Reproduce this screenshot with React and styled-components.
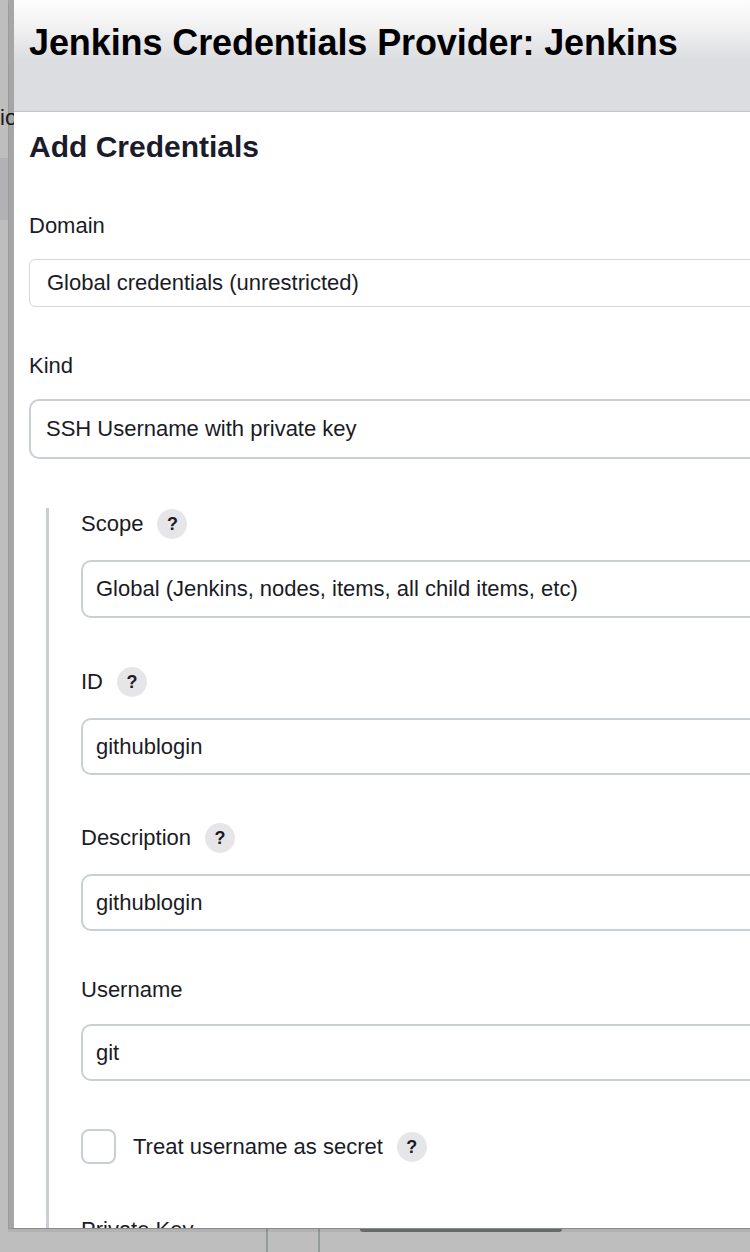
import React from "react";
import styled, { createGlobalStyle } from "styled-components";

const GlobalStyle = createGlobalStyle`
	html, body {
		margin: 0;
		padding: 0;
	}
	body {
		width: 750px;
		height: 1252px;
		overflow: hidden;
		background: #bebebe;
		font-family: "Liberation Sans", Arial, sans-serif;
	}
`;

const Screen = styled.div`
	position: relative;
	width: 750px;
	height: 1252px;
	overflow: hidden;
	background: #bebebe;
`;

// page that sits behind the modal overlay
const PageBehind = styled.div`
	display: flex;
	flex-direction: column;
	height: 100%;
`;

const SideText = styled.div`
	margin-top: 106px;
	font-size: 22px;
	line-height: 24px;
	color: #1b1b1b;
	white-space: nowrap;
`;

const SideBand = styled.div`
	margin-top: 28px;
	width: 8px;
	height: 62px;
	background: #b2b2b4;
`;

const Filler = styled.div`
	flex: 1;
`;

const FooterStrip = styled.div`
	display: flex;
	height: 24px;
	padding-left: 266px;
`;

const Rule = styled.div`
	width: 2px;
	height: 100%;
	margin-right: ${(p) => p.$after}px;
	background: #939b9b;
`;

const ButtonEdge = styled.div`
	width: 202px;
	height: 3px;
	margin-top: 1px;
	border-radius: 0 0 3px 3px;
	background: #6d7171;
`;

const Dialog = styled.div`
	position: absolute;
	top: 0;
	left: 8px;
	width: 800px;
	height: 1228px;
	display: flex;
	flex-direction: column;
	overflow: hidden;
	background: #fff;
	background-clip: padding-box;
	border-left: 6px solid rgba(0, 0, 0, 0.12);
	border-bottom: 1px solid #8a8a8a;
	box-shadow: 0 3px 0 rgba(0, 0, 0, 0.06);
`;

const Header = styled.div`
	flex: 0 0 auto;
	height: 112px;
	box-sizing: border-box;
	padding: 23px 0 0 15px;
	border-bottom: 1px solid #c4c4c6;
	background: linear-gradient(to bottom, #fdfdfd 0px, #f2f2f3 26px, #dcdde0 60px, #dcdde0 100%);
`;

const Title = styled.h1`
	margin: 0;
	font-size: 36px;
	line-height: 40px;
	font-weight: 700;
	letter-spacing: -0.1px;
	color: #000;
	white-space: nowrap;
`;

const Body = styled.div`
	flex: 1;
	display: flex;
	flex-direction: column;
	padding: 17px 0 0 15px;
	color: #1b1b26;
`;

const Heading = styled.h2`
	margin: 0 0 47px;
	font-size: 30px;
	line-height: 36px;
	font-weight: 700;
	color: #1b1b2b;
`;

const Group = styled.div`
	display: flex;
	flex-direction: column;
	margin-top: ${(p) => p.$top || 0}px;
`;

const LabelRow = styled.div`
	display: flex;
	align-items: center;
	gap: 14px;
	min-height: ${(p) => (p.$help ? 30 : 28)}px;
	margin-bottom: ${(p) => p.$gap}px;
	font-size: 22px;
	line-height: 28px;
`;

const Help = styled.span`
	display: inline-flex;
	align-items: center;
	justify-content: center;
	width: 30px;
	height: 30px;
	border-radius: 50%;
	background: #e6e6e8;
	font-size: 18px;
	font-weight: 700;
	color: #1b1b26;
`;

const Field = styled.div`
	display: flex;
	align-items: center;
	box-sizing: border-box;
	height: ${(p) => p.$h}px;
	padding-left: ${(p) => p.$pad}px;
	border: ${(p) => (p.$thin ? "1px solid #d4d6d8" : "2px solid #c9cfd3")};
	border-radius: ${(p) => (p.$thin ? 6 : 10)}px;
	background: #fff;
	font-size: 22px;
	color: #1b1b26;
	white-space: nowrap;
`;

const Nested = styled.div`
	display: flex;
	flex-direction: column;
	margin: 49px 0 0 17px;
	padding: 1px 0 0 32px;
	border-left: 3px solid #c9cfd3;
	flex: 1;
`;

const CheckRow = styled.div`
	display: flex;
	align-items: center;
	margin-top: 48px;
	font-size: 22px;
	line-height: 28px;
`;

const Checkbox = styled.span`
	box-sizing: border-box;
	width: 35px;
	height: 35px;
	margin-right: 17px;
	border: 2px solid #c9cfd3;
	border-radius: 8px;
	background: #fff;
`;

const CheckText = styled.span`
	margin-right: 14px;
`;

function Label({ text, help, gap = 20 }) {
	return (
		<LabelRow $help={help} $gap={gap}>
			<span>{text}</span>
			{help && <Help>?</Help>}
		</LabelRow>
	);
}

export default function App() {
	return (
		<>
			<GlobalStyle />
			<Screen>
				<PageBehind>
					<SideText>io</SideText>
					<SideBand />
					<Filler />
					<FooterStrip>
						<Rule $after={50} />
						<Rule $after={40} />
						<ButtonEdge />
					</FooterStrip>
				</PageBehind>
				<Dialog>
					<Header>
						<Title>Jenkins Credentials Provider: Jenkins</Title>
					</Header>
					<Body>
						<Heading>Add Credentials</Heading>
						<Group>
							<Label text="Domain" gap={19} />
							<Field $thin $h={48} $pad={17}>
								Global credentials (unrestricted)
							</Field>
						</Group>
						<Group $top={45}>
							<Label text="Kind" gap={19} />
							<Field $h={60} $pad={15}>
								SSH Username with private key
							</Field>
						</Group>
						<Nested>
							<Group>
								<Label text="Scope" help gap={21} />
								<Field $h={58} $pad={13}>
									Global (Jenkins, nodes, items, all child items, etc)
								</Field>
							</Group>
							<Group $top={49}>
								<Label text="ID" help gap={21} />
								<Field $h={57} $pad={13}>
									githublogin
								</Field>
							</Group>
							<Group $top={48}>
								<Label text="Description" help gap={21} />
								<Field $h={57} $pad={13}>
									githublogin
								</Field>
							</Group>
							<Group $top={45}>
								<Label text="Username" gap={20} />
								<Field $h={57} $pad={13}>
									git
								</Field>
							</Group>
							<CheckRow>
								<Checkbox />
								<CheckText>Treat username as secret</CheckText>
								<Help>?</Help>
							</CheckRow>
							<Group $top={52}>
								<Label text="Private Key" />
							</Group>
						</Nested>
					</Body>
				</Dialog>
			</Screen>
		</>
	);
}
